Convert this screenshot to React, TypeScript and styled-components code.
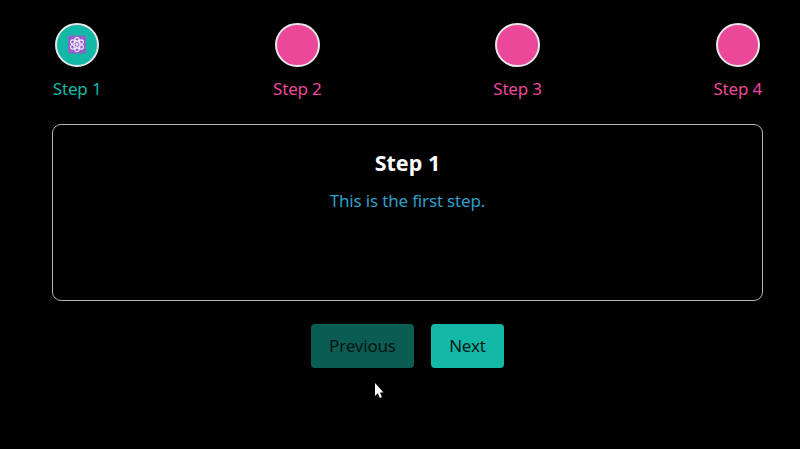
import React, { useState } from "react";
import styled, { createGlobalStyle } from "styled-components";

const GlobalStyle = createGlobalStyle`
  * { box-sizing: border-box; }
  body {
    margin: 0;
    background: #000;
    font-family: "Segoe UI", "Noto Sans", sans-serif;
    font-size: 17px;
    letter-spacing: -0.17px;
    overflow: hidden;
  }
`;

const Page = styled.main`
  height: 449px;
  padding: 22px 37.5px 0 52.4px;
  position: relative;
`;

const Steps = styled.div`
  display: flex;
  justify-content: space-between;
`;

const StepItem = styled.div<{ $active: boolean }>`
  width: 49.5px;
  display: flex;
  flex-direction: column;
  align-items: center;
  color: ${(p) => (p.$active ? "#14b8a6" : "#ec4899")};
`;

const Circle = styled.div<{ $active: boolean }>`
  width: 44.5px;
  height: 44.5px;
  margin-top: 0.5px;
  border: 2px solid #e5e7eb;
  border-radius: 50%;
  background: ${(p) => (p.$active ? "#14b8a6" : "#ec4899")};
  display: flex;
  align-items: center;
  justify-content: center;
`;

const StepLabel = styled.span`
  margin-top: 9px;
  line-height: 26px;
  white-space: nowrap;
`;

const Panel = styled.section`
  margin-top: 22px;
  height: 177px;
  border: 1px solid #b5b7bb;
  border-radius: 9px;
  padding-top: 22px;
  text-align: center;
`;

const Title = styled.h2`
  margin: 0;
  color: #fff;
  font-size: 21.5px;
  line-height: 32px;
  font-weight: 700;
  letter-spacing: 0;
`;

const Description = styled.p`
  margin: 9px 0 0;
  color: #2f9fc8;
  line-height: 26px;
`;

const Actions = styled.div`
  display: flex;
  justify-content: center;
  gap: 17px;
  margin-top: 23px;
`;

const Button = styled.button<{ $width: number }>`
  width: ${(p) => p.$width}px;
  height: 44px;
  padding: 0 0 1px;
  border: 0;
  border-radius: 4px;
  background: #14b8a6;
  color: #001a17;
  font: inherit;
  letter-spacing: inherit;
  &:disabled { background: #0b5c53; color: #001512; }
`;

const Pointer = styled.svg`
  position: absolute;
  left: 374px;
  top: 383px;
`;

const AtomIcon = () => (
  <svg width="19" height="19" viewBox="0 0 19 19" fill="none">
    <rect x="0" y="0.5" width="18" height="18" rx="2.5" fill="#9160cb" />
    <g stroke="#f3eaff" strokeWidth="1.15">
      <ellipse cx="9" cy="9.5" rx="2.9" ry="7.2" />
      <ellipse cx="9" cy="9.5" rx="2.9" ry="7.2" transform="rotate(60 9 9.5)" />
      <ellipse cx="9" cy="9.5" rx="2.9" ry="7.2" transform="rotate(-60 9 9.5)" />
    </g>
    <circle cx="9" cy="9.5" r="1.3" fill="#fff" />
  </svg>
);

const steps = [
  { label: "Step 1", text: "This is the first step." },
  { label: "Step 2", text: "This is the second step." },
  { label: "Step 3", text: "This is the third step." },
  { label: "Step 4", text: "This is the fourth step." },
];

export default function App() {
  const [current, setCurrent] = useState(0);
  return (
    <Page>
      <GlobalStyle />
      <Steps>
        {steps.map((step, i) => (
          <StepItem key={step.label} $active={i <= current}>
            <Circle $active={i <= current}>{i <= current && <AtomIcon />}</Circle>
            <StepLabel>{step.label}</StepLabel>
          </StepItem>
        ))}
      </Steps>
      <Panel>
        <Title>{steps[current].label}</Title>
        <Description>{steps[current].text}</Description>
      </Panel>
      <Actions>
        <Button $width={103} disabled={current === 0} onClick={() => setCurrent(current - 1)}>
          Previous
        </Button>
        <Button
          $width={73}
          disabled={current === steps.length - 1}
          onClick={() => setCurrent(current + 1)}
        >
          Next
        </Button>
      </Actions>
      <Pointer width="10" height="16" viewBox="0 0 10 16">
        <path d="M1 0V13L3.8 10.3L5.9 15L7.9 14.1L5.9 9.5H9.5Z" fill="#fff" />
      </Pointer>
    </Page>
  );
}
